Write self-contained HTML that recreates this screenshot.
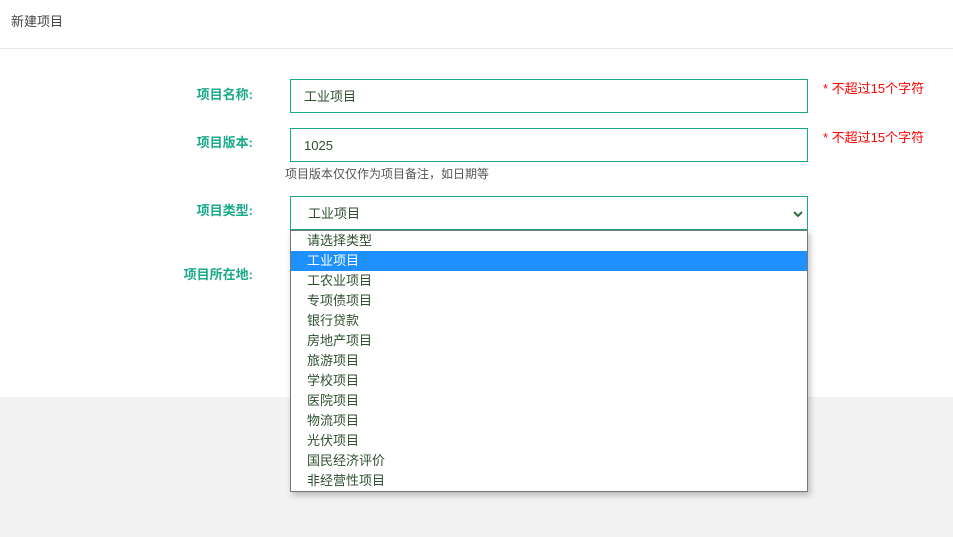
<!DOCTYPE html>
<html><head><meta charset="utf-8"><style>
body{margin:0;width:953px;height:537px;background:#f2f2f2;font-family:"Liberation Sans","Noto Sans CJK SC",sans-serif;position:relative;overflow:hidden}
.top{position:absolute;left:0;top:0;width:953px;height:397px;background:#fff}
.hd{position:absolute;left:0;top:0;width:953px;height:48px;border-bottom:1px solid #e8e8e8;font-size:13px;color:#444;line-height:44px;text-indent:11px}
.lb{position:absolute;right:700px;font-size:13px;font-weight:bold;color:#1aaa8a}
.in{position:absolute;left:290px;height:34px;border:1px solid #1aaa8a;box-sizing:border-box;width:518px;font-size:13px;color:#2f4f2f;line-height:34px;padding-left:13px}
.req{position:absolute;left:823px;font-size:13px;color:#f00}
.note{position:absolute;left:285px;top:165px;font-size:12px;color:#555}
.dd{position:absolute;left:290px;top:230px;width:518px;height:262px;box-sizing:border-box;border:1px solid #777;background:#fff;box-shadow:2px 3px 6px rgba(0,0,0,.25)}
.dd div{height:20px;line-height:20px;font-size:13px;color:#2f4f2f;padding-left:16px}
.dd .s{background:#1e90ff;color:#fff}
</style></head><body>
<div class="top">
<div class="hd">新建项目</div>
<div class="lb" style="top:84px">项目名称:</div>
<div class="in" style="top:79px">工业项目</div>
<div class="req" style="top:78px">* 不超过15个字符</div>
<div class="lb" style="top:132px">项目版本:</div>
<div class="in" style="top:128px">1025</div>
<div class="req" style="top:127px">* 不超过15个字符</div>
<div class="note">项目版本仅仅作为项目备注，如日期等</div>
<div class="lb" style="top:200px">项目类型:</div>
<div class="in" style="top:196px;padding-left:17px">工业项目<svg style="position:absolute;right:4px;top:13px" width="10" height="8" viewBox="0 0 10 8"><path d="M1 2l4 4 4-4" stroke="#2f6f3f" stroke-width="2" fill="none"/></svg></div>
<div class="lb" style="top:264px">项目所在地:</div>
</div>
<div class="dd">
<div>请选择类型</div><div class="s">工业项目</div><div>工农业项目</div><div>专项债项目</div><div>银行贷款</div><div>房地产项目</div><div>旅游项目</div><div>学校项目</div><div>医院项目</div><div>物流项目</div><div>光伏项目</div><div>国民经济评价</div><div>非经营性项目</div>
</div>
</body></html>
